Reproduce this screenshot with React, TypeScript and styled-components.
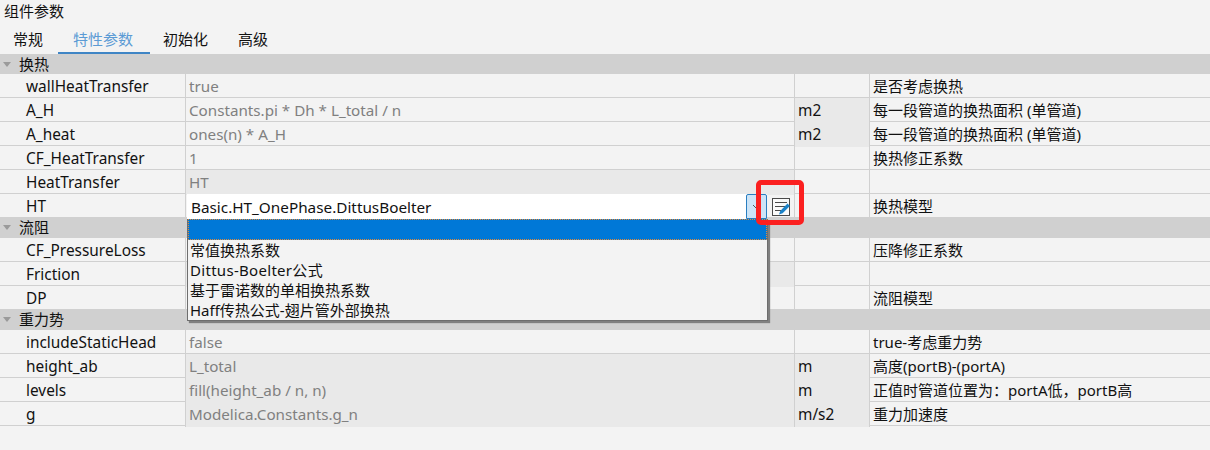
import React from "react";
import styled, { createGlobalStyle } from "styled-components";

const Global = createGlobalStyle`
  html, body { margin: 0; padding: 0; background: #f3f3f3; }
  body { font-family: "Noto Sans", "Noto Sans CJK SC", sans-serif; font-size: 15px; color: #111; }
`;

const Page = styled.div`
  position: relative;
  width: 1210px;
  height: 450px;
  overflow: hidden;
  background: #f3f3f3;
`;

const Title = styled.div`
  height: 27px;
  line-height: 23px;
  padding-left: 4px;
`;

const TabBar = styled.div`
  display: flex;
  height: 27px;
  padding-left: 13px;
`;

const Tab = styled.div<{ $active?: boolean }>`
  height: 25px;
  line-height: 24px;
  padding: 0 ${(p) => (p.$active ? "17px" : "15px")} 0 15px;
  margin-right: ${(p) => (p.$active ? "-2px" : "0")};
  color: ${(p) => (p.$active ? "#5b9bd5" : "#111")};
  border-bottom: 2px solid ${(p) => (p.$active ? "#3f85c5" : "transparent")};
  &:first-child { padding-left: 0; }
`;

const SectionHeader = styled.div`
  display: flex;
  align-items: center;
  height: 21px;
  line-height: 21px;
  background: #d0d0d0;
  &:first-child { height: 20px; line-height: 19px; }
`;

const Caret = styled.span`
  width: 0;
  height: 0;
  margin: 0 8px 0 3px;
  border-left: 4px solid transparent;
  border-right: 4px solid transparent;
  border-top: 5px solid #9a9a9a;
`;

const Row = styled.div<{ $last?: boolean }>`
  display: grid;
  grid-template-columns: 186px 609px 75px 1fr;
  height: ${(p) => (p.$last ? "23px" : "24px")};
  border-bottom: ${(p) => (p.$last ? "0" : "1px solid #d0d0d0")};
  box-sizing: border-box;
`;

const Cell = styled.div<{ $shaded?: boolean; $muted?: boolean; $indent?: number; $size?: number }>`
  position: relative;
  box-sizing: border-box;
  height: 100%;
  line-height: 25px;
  font-size: ${(p) => p.$size ?? 15}px;
  padding-left: ${(p) => p.$indent ?? 3}px;
  white-space: nowrap;
  border-right: 1px solid #d0d0d0;
  background: ${(p) => (p.$shaded ? "#e9e9e9" : "transparent")};
  color: ${(p) => (p.$muted ? "#808080" : "#111")};
  &:last-child { border-right: 0; }
`;

const EditorCell = styled(Cell)`
  display: flex;
  padding-left: 1px;
`;

const Combo = styled.div`
  position: relative;
  z-index: 2;
  display: flex;
  justify-content: space-between;
  box-sizing: border-box;
  width: 580px;
  height: 25px;
  line-height: 27px;
  font-size: 15.3px;
  padding-left: 4px;
  background: #fff;
  color: #111;
`;

const ComboButton = styled.div`
  display: flex;
  align-items: center;
  justify-content: center;
  box-sizing: border-box;
  width: 21px;
  height: 25px;
  background: #cce4f7;
  border: 1px solid #2a7ec0;
  border-radius: 2px 2px 0 0;
`;

const Dropdown = styled.div`
  position: absolute;
  left: 0;
  top: 25px;
  box-sizing: border-box;
  width: 581px;
  height: 102px;
  font-size: 15px;
  background: #f3f3f3;
  border: 1px solid #6e6e6e;
  border-top: 0;
  box-shadow: 2px 2px 1px #808080;
`;

const Option = styled.div<{ $selected?: boolean; $spacing?: number }>`
  box-sizing: border-box;
  height: 20px;
  line-height: 21px;
  padding-left: 2px;
  color: #111;
  letter-spacing: ${(p) => p.$spacing ?? 0}px;
  ${(p) => p.$selected && "height: 21px; background: #0078d7; outline: 1px dotted #e08a3c; outline-offset: -1px;"}
`;

const EditIcon = styled.svg`
  flex: none;
  margin: 4px 0 0 5px;
`;

const Annotation = styled.div`
  position: absolute;
  left: 756px;
  top: 180px;
  width: 48px;
  height: 45px;
  box-sizing: border-box;
  border: 5px solid #fb2020;
  border-radius: 5px;
  z-index: 3;
  pointer-events: none;
`;

type RowData = {
  name: string;
  value?: string;
  unit?: string;
  desc?: string;
  shadeValue?: boolean;
  shadeUnit?: boolean;
  editor?: boolean;
};

const sections: { title: string; rows: RowData[] }[] = [
  {
    title: "换热",
    rows: [
      { name: "wallHeatTransfer", value: "true", desc: "是否考虑换热" },
      { name: "A_H", value: "Constants.pi * Dh * L_total / n", unit: "m2", shadeUnit: true, desc: "每一段管道的换热面积 (单管道)" },
      { name: "A_heat", value: "ones(n) * A_H", unit: "m2", shadeUnit: true, desc: "每一段管道的换热面积 (单管道)" },
      { name: "CF_HeatTransfer", value: "1", desc: "换热修正系数" },
      { name: "HeatTransfer", value: "HT", shadeValue: true },
      { name: "HT", editor: true, desc: "换热模型" },
    ],
  },
  {
    title: "流阻",
    rows: [
      { name: "CF_PressureLoss", desc: "压降修正系数" },
      { name: "Friction", shadeValue: true },
      { name: "DP", desc: "流阻模型" },
    ],
  },
  {
    title: "重力势",
    rows: [
      { name: "includeStaticHead", value: "false", desc: "true-考虑重力势" },
      { name: "height_ab", value: "L_total", unit: "m", shadeValue: true, shadeUnit: true, desc: "高度(portB)-(portA)" },
      { name: "levels", value: "fill(height_ab / n, n)", unit: "m", shadeValue: true, shadeUnit: true, desc: "正值时管道位置为：portA低，portB高" },
      { name: "g", value: "Modelica.Constants.g_n", unit: "m/s2", shadeValue: true, shadeUnit: true, desc: "重力加速度" },
    ],
  },
];

const options: { text: string; spacing?: number }[] = [
  { text: "常值换热系数" },
  { text: "Dittus-Boelter公式", spacing: 0.3 },
  { text: "基于雷诺数的单相换热系数" },
  { text: "Haff传热公式-翅片管外部换热" },
];

export default function App() {
  return (
    <Page>
      <Global />
      <Title>组件参数</Title>
      <TabBar>
        <Tab>常规</Tab>
        <Tab $active>特性参数</Tab>
        <Tab>初始化</Tab>
        <Tab>高级</Tab>
      </TabBar>
      <div>
        {sections.map((s, si) => (
          <React.Fragment key={s.title}>
            <SectionHeader>
              <Caret />
              {s.title}
            </SectionHeader>
            {s.rows.map((r, ri) => (
              <Row key={r.name} $last={si < sections.length - 1 && ri === s.rows.length - 1}>
                <Cell $indent={26} $size={15.4}>{r.name}</Cell>
                {r.editor ? (
                  <EditorCell>
                    <Combo>
                      Basic.HT_OnePhase.DittusBoelter
                      <ComboButton>
                        <svg width="9" height="6" viewBox="0 0 9 6">
                          <path d="M1 1l3.5 3.5L8 1" fill="none" stroke="#555" strokeWidth="1" />
                        </svg>
                      </ComboButton>
                      <Dropdown>
                        <Option $selected />
                        {options.map((o) => (
                          <Option key={o.text} $spacing={o.spacing}>{o.text}</Option>
                        ))}
                      </Dropdown>
                    </Combo>
                    <EditIcon width="18" height="18" viewBox="0 0 18 18">
                      <rect x="0.5" y="0.5" width="17" height="17" fill="#fafafa" stroke="#4a4a4a" />
                      <path d="M3 4.5h12M3 8.5h11M3 12.5h6" stroke="#4a4a4a" strokeWidth="1" />
                      <path d="M7 16.5l1.2-3.6 7.3-7.3 2.4 2.4-7.3 7.3z" fill="#1a82c8" />
                    </EditIcon>
                  </EditorCell>
                ) : (
                  <Cell $muted $shaded={r.shadeValue} $size={15.2}>
                    {r.value}
                  </Cell>
                )}
                <Cell $shaded={r.shadeUnit} $size={15.4}>{r.unit}</Cell>
                <Cell>{r.desc}</Cell>
              </Row>
            ))}
          </React.Fragment>
        ))}
      </div>
      <Annotation />
    </Page>
  );
}
